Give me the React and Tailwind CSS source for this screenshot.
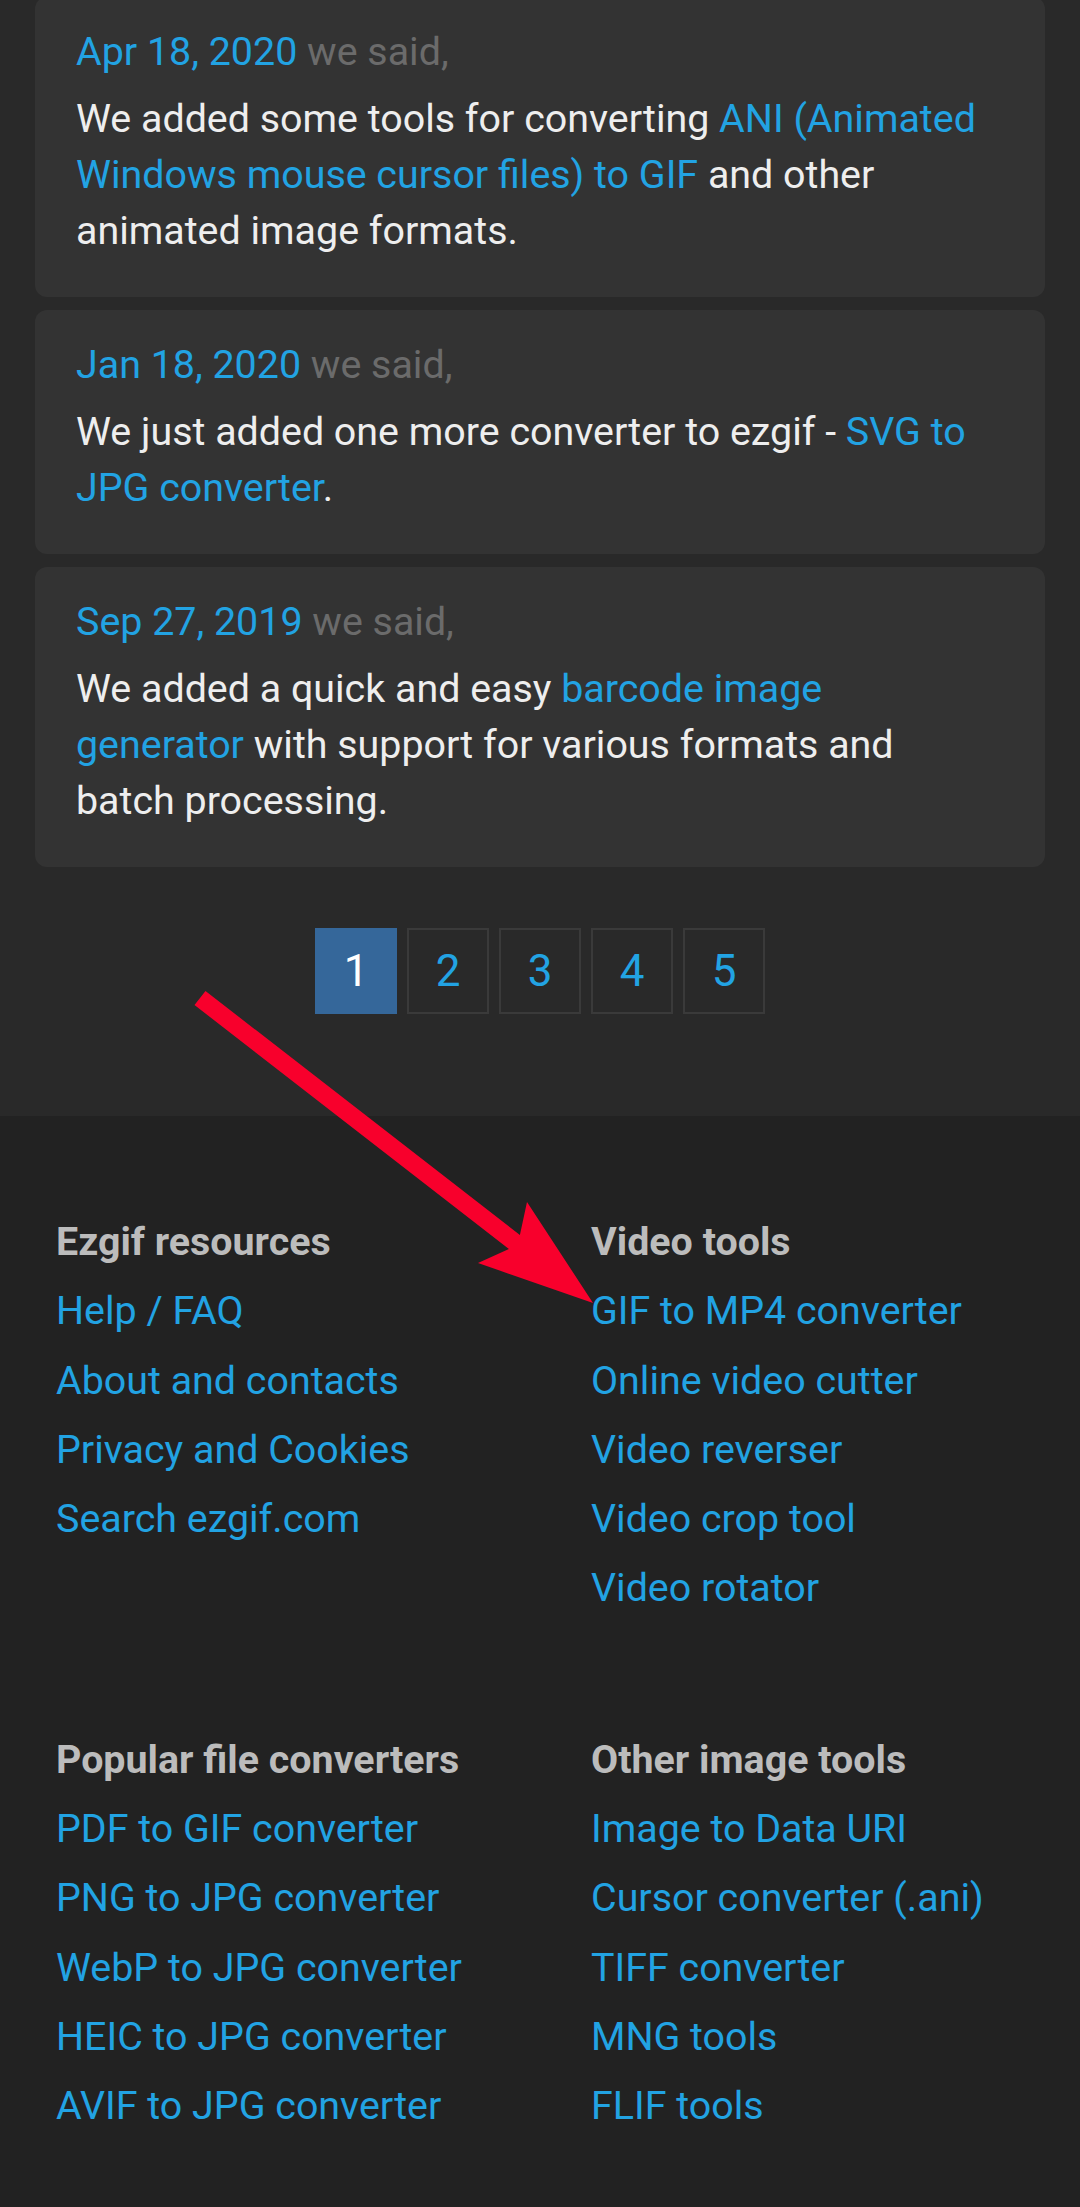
import React from 'react';

const news = [
	{
		date: 'Apr 18, 2020',
		body: (
			<>
				We added some tools for converting <a className="text-[#22a3e3]">ANI (Animated Windows mouse cursor files) to GIF</a> and other animated image formats.
			</>
		),
	},
	{
		date: 'Jan 18, 2020',
		body: (
			<>
				We just added one more converter to ezgif - <a className="text-[#22a3e3]">SVG to JPG converter</a>.
			</>
		),
	},
	{
		date: 'Sep 27, 2019',
		body: (
			<>
				We added a quick and easy <a className="text-[#22a3e3]">barcode image generator</a> with support for various formats and batch processing.
			</>
		),
	},
];

const footer = [
	[
		{title: 'Ezgif resources', links: ['Help / FAQ', 'About and contacts', 'Privacy and Cookies', 'Search ezgif.com']},
		{title: 'Video tools', links: ['GIF to MP4 converter', 'Online video cutter', 'Video reverser', 'Video crop tool', 'Video rotator']},
	],
	[
		{title: 'Popular file converters', links: ['PDF to GIF converter', 'PNG to JPG converter', 'WebP to JPG converter', 'HEIC to JPG converter', 'AVIF to JPG converter']},
		{title: 'Other image tools', links: ['Image to Data URI', 'Cursor converter (.ani)', 'TIFF converter', 'MNG tools', 'FLIF tools']},
	],
];

function NewsCard({date, body}) {
	return (
		<div className="rounded-[12px] bg-[#333333] pl-[41px] pr-[54px] pt-[27px] pb-[38px] text-[39.4px]">
			<div className="leading-[56px]">
				<span className="text-[#22a3e3]">{date}</span> <span className="text-[#6b6b6b]">we said,</span>
			</div>
			<p className="mt-[11px] leading-[56px] text-[#eeeeee]">{body}</p>
		</div>
	);
}

export default function App() {
	return (
		<div className="relative min-h-[2207px] w-[1080px] overflow-hidden bg-[#292929] font-['Roboto','Liberation_Sans',sans-serif]">
			<section className="px-[35px] pb-[102px]">
				<div className="-mt-[3px] flex flex-col gap-[13px]">
					{news.map((n, i) => (
						<NewsCard key={i} {...n} />
					))}
				</div>
				<div className="mt-[61px] flex justify-center gap-[10px]">
					{[1, 2, 3, 4, 5].map((p) => (
						<div
							key={p}
							className={
								p === 1
									? 'flex h-[86px] w-[82px] items-center justify-center bg-[#35679a] text-[44px] text-white'
									: 'flex h-[86px] w-[82px] items-center justify-center border-2 border-[#3a3a3a] text-[44px] text-[#22a3e3]'
							}
						>
							{p}
						</div>
					))}
				</div>
			</section>

			<footer className="bg-[#222222] px-[56px] pt-[91px] pb-[66px] text-[39.4px]">
				<div className="flex flex-col gap-[102px]">
					{footer.map((row, i) => (
						<div key={i} className="grid grid-cols-[535px_1fr]">
							{row.map((col) => (
								<div key={col.title}>
									<div className="h-[69.3px] leading-[69.3px] font-bold text-[#bcbcbc]">{col.title}</div>
									{col.links.map((l) => (
										<div key={l} className="h-[69.3px] leading-[69.3px] text-[#22a3e3]">
											{l}
										</div>
									))}
								</div>
							))}
						</div>
					))}
				</div>
			</footer>

			<svg className="pointer-events-none absolute left-0 top-0" width="1080" height="2207" viewBox="0 0 1080 2207">
				<polygon
					fill="#f8002c"
					points="205.5,991 519.9,1234.9 527,1202 593,1303 478,1263 508.9,1249.1 194.5,1005"
				/>
			</svg>
		</div>
	);
}
